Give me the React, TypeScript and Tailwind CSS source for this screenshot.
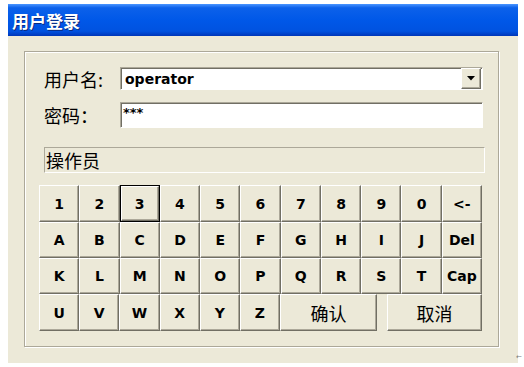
import React from "react";

const btnBase =
  "flex items-center justify-center bg-[#ece9d8] border-t border-l border-white border-r border-b border-r-[#716f64] border-b-[#716f64] shadow-[inset_-1px_-1px_0_#aca899] text-[14px] font-bold text-black leading-none";

function Key({ label, focus }: { label: string; focus?: boolean }) {
  if (focus) {
    return (
      <div className="border border-black flex">
        <div className={btnBase + " flex-1"}>{label}</div>
      </div>
    );
  }
  return <div className={btnBase}>{label}</div>;
}

export default function App() {
  const row1 = ["1", "2", "3", "4", "5", "6", "7", "8", "9", "0", "<-"];
  const row2 = ["A", "B", "C", "D", "E", "F", "G", "H", "I", "J", "Del"];
  const row3 = ["K", "L", "M", "N", "O", "P", "Q", "R", "S", "T", "Cap"];
  const row4 = ["U", "V", "W", "X", "Y", "Z"];
  const cjk = { fontFamily: '"Noto Sans CJK SC", "Noto Sans", sans-serif' };
  const latin = { fontFamily: '"DejaVu Sans", sans-serif' };
  return (
    <div className="w-[524px] h-[367px] bg-white relative overflow-hidden">
      <div className="ml-[8px] pt-[4px] w-[510px] flex flex-col">
        <div className="h-[32px] flex items-center pl-[4px] bg-[linear-gradient(to_bottom,#4a95ff_0%,#0c61ea_12%,#0058e8_50%,#0052e0_85%,#0036b8_100%)]">
          <span
            className="text-white text-[17px] font-bold leading-none [text-shadow:1px_1px_0_#0a2a80]"
            style={cjk}
          >
            用户登录
          </span>
        </div>
        <div className="h-[327px] bg-[#ece9d8] pt-[15px] pl-[16px]">
          <div className="w-[475px] h-[296px] border border-[#aca899] shadow-[inset_1px_1px_0_#fff,1px_1px_0_#fff] pl-[14px] pt-[15px] flex flex-col">
            <div className="flex items-center h-[23px] ml-[5px]">
              <div className="w-[76px] text-[18px] leading-none text-black" style={cjk}>
                用户名:
              </div>
              <div className="w-[363px] h-[23px] bg-white border-t border-l border-[#aca899] border-r border-b border-r-[#fff] border-b-[#fff] shadow-[inset_1px_1px_0_#716f64] flex items-center">
                <span className="flex-1 pl-[4px] text-[14px] font-bold text-black leading-none" style={latin}>
                  operator
                </span>
                <div className="w-[20px] h-[21px] mr-[1px] bg-[#ece9d8] border-t border-l border-white border-r border-b border-r-[#716f64] border-b-[#716f64] shadow-[inset_-1px_-1px_0_#aca899] flex items-center justify-center">
                  <svg width="8" height="5" viewBox="0 0 8 5">
                    <polygon points="0,0 8,0 4,4.5" fill="#000" />
                  </svg>
                </div>
              </div>
            </div>
            <div className="flex items-center h-[26px] mt-[12px] ml-[5px]">
              <div className="w-[76px] text-[18px] leading-none text-black" style={cjk}>
                密码：
              </div>
              <div className="w-[363px] h-[26px] bg-white border-t border-l border-[#aca899] border-r border-b border-r-[#fff] border-b-[#fff] shadow-[inset_1px_1px_0_#716f64] flex items-start pt-[3px]">
                <span className="pl-[2px] text-[13px] font-bold text-black leading-none" style={latin}>
                  ***
                </span>
              </div>
            </div>
            <div
              className="mt-[19px] ml-[5px] w-[441px] h-[26px] border-t border-l border-[#aca899] border-r border-b border-r-white border-b-white flex items-center pl-[1px] text-[18px] leading-none text-black"
              style={cjk}
            >
              操作员
            </div>
            <div className="mt-[12px] w-[443px] flex flex-col" style={latin}>
              <div className="grid grid-cols-11 h-[37px]">
                {row1.map((k) => (
                  <Key key={k} label={k} focus={k === "3"} />
                ))}
              </div>
              <div className="grid grid-cols-11 h-[36px]">
                {row2.map((k) => (
                  <Key key={k} label={k} />
                ))}
              </div>
              <div className="grid grid-cols-11 h-[36px]">
                {row3.map((k) => (
                  <Key key={k} label={k} />
                ))}
              </div>
              <div className="flex h-[37px]">
                <div className="grid grid-cols-6 w-[241px]">
                  {row4.map((k) => (
                    <Key key={k} label={k} />
                  ))}
                </div>
                <div className={btnBase + " w-[97px] !text-[18px] !font-normal"} style={cjk}>
                  确认
                </div>
                <div className="w-[10px]" />
                <div className={btnBase + " w-[95px] !text-[18px] !font-normal"} style={cjk}>
                  取消
                </div>
              </div>
            </div>
          </div>
        </div>
      </div>
      <span
        className="absolute left-[516px] top-[354px] text-[7px] text-[#777] leading-none"
        style={{ fontFamily: '"DejaVu Sans", sans-serif' }}
      >
        ←
      </span>
    </div>
  );
}
